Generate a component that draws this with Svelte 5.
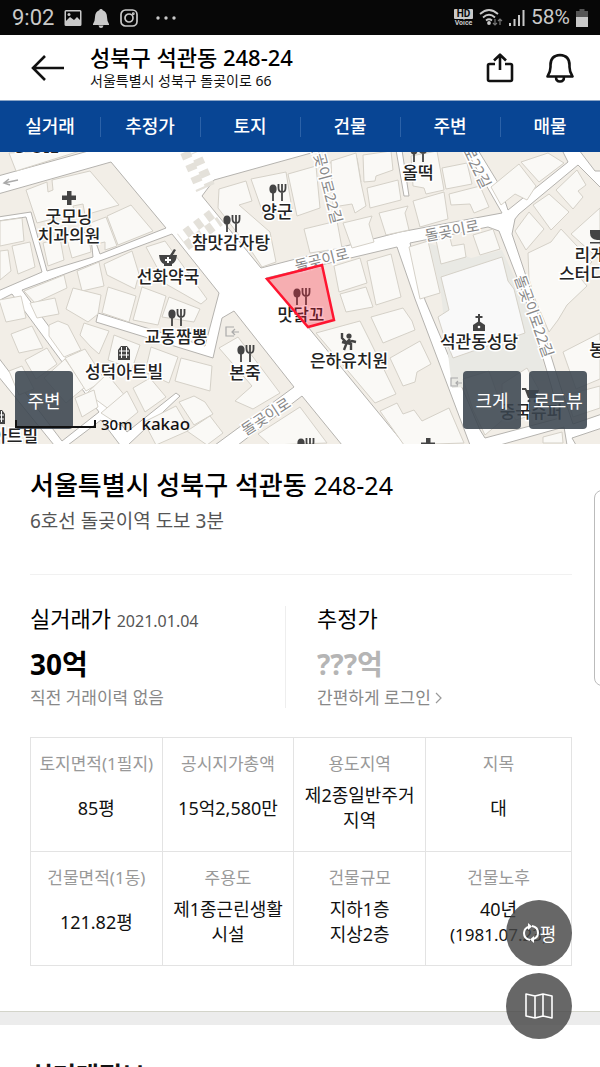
<script>
  const tabs = ['실거래', '추정가', '토지', '건물', '주변', '매물'];

  const rows = [
    [
      { label: '토지면적(1필지)', value: ['85평'] },
      { label: '공시지가총액', value: ['15억2,580만'] },
      { label: '용도지역', value: ['제2종일반주거', '지역'] },
      { label: '지목', value: ['대'] }
    ],
    [
      { label: '건물면적(1동)', value: ['121.82평'] },
      { label: '주용도', value: ['제1종근린생활', '시설'] },
      { label: '건물규모', value: ['지하1층', '지상2층'] },
      { label: '건물노후', value: ['40년', '(1981.07.23)'] }
    ]
  ];

  const blocks = [
    '-2,150 92,150 -2,176',
    '-2,194 111,162 166,228 100,254 95,240 89,218 93,257 47,271 31,212 -2,217',
    '-2,221 26,217 42,272 -2,291',
    '22,290 172,234 219,293 205,346 98,313 96,322 213,358 222,318 234,311 294,387 215,445 128,445 180,396 176,393 127,432',
    '-2,301 12,294 99,412 62,441 -2,357',
    '-2,376 54,445 -2,445',
    '68,445 101,420 120,445',
    '202,196 214,180 322,150 396,150 404,196 409,196 402,150 466,150 502,213 400,232 261,268',
    '478,150 500,186 508,210 568,162 562,150',
    '579,150 595,171 602,171 602,150',
    '266,278 397,247 415,299 470,445 405,445 308,327',
    '410,243 488,227 499,231 525,298 551,385 560,418 485,438 480,430 425,300',
    '515,219 519,214 578,165 602,189 602,414 573,424 560,385 529,285 512,234',
    '500,445 564,427 567,445',
    '576,445 572,438 602,428 602,445',
    '238,445 302,396 342,445'
  ];

  const buildings = [
    '9,153 45,151 80,151 16,171',
    '26,190 47,182 48,192 53,190 52,180 90,171 119,205 85,215 83,204 73,206 75,213 37,223',
    '43,243 60,238 64,260 48,266', '66,236 88,232 91,252 72,258',
    '107,216 131,205 153,231 118,245', '90,223 106,217 117,246 105,250 105,242 96,244',
    '0,221 22,218 24,241 0,246', '0,251 8,250 11,271 0,280', '12,246 30,242 35,267 18,274',
    '146,247 165,241 207,299 201,304 166,284', '104,264 132,251 139,274 135,289 107,275',
    '77,271 99,262 104,286 82,291', '24,291 64,275 67,288 35,303',
    '73,288 101,295 98,314 88,322 66,309', '108,287 136,296 129,322 102,313',
    '142,287 166,296 158,325 133,320', '169,297 200,309 194,322 162,317',
    '-1,300 21,296 26,318 6,322', '30,303 55,298 59,314 37,318',
    '49,325 58,321 68,325 81,350 64,357 49,336', '84,323 109,331 99,354 91,347 80,335',
    '114,335 140,345 132,369 108,360', '151,347 178,357 169,383 145,372',
    '181,358 212,366 210,391 175,381',
    '11,334 32,326 43,348 19,353', '25,360 47,348 57,364 36,379', '44,378 65,359 85,387 66,403',
    '65,358 85,349 105,380 86,391', '87,393 107,374 126,397 110,410',
    '101,413 127,391 138,412 121,426', '133,388 150,378 166,397 145,412',
    '144,422 176,406 190,430 156,445', '179,402 194,396 205,402 213,414 194,425',
    '187,431 210,416 223,433 207,445', '219,348 238,337 280,393 253,409 235,401 252,386',
    '75,398 94,390 98,407 82,417', '9,371 22,366 34,389 19,395',
    '219,189 246,181 252,201 239,205 270,232 276,262 262,267 252,252 218,208',
    '251,179 286,172 292,209 264,216', '288,174 316,166 320,208 297,216',
    '320,166 330,163 357,158 361,182 336,190 325,194',
    '331,161 356,153 361,183 366,206 355,213 352,204 333,207',
    '363,155 391,151 393,170 376,176 375,181 364,182', '367,188 398,180 401,200 370,208',
    '304,229 337,221 342,248 310,253',
    '343,223 372,216 369,224 374,242 352,248', '379,213 408,206 405,213 409,230 386,235',
    '413,201 444,192 448,219 420,227', '442,168 467,163 472,184 446,189',
    '449,194 480,186 489,207 474,213 470,204 451,205',
    '411,156 437,151 444,190 426,194 424,188 413,186', '491,187 519,164 536,186 527,200 515,194 501,205',
    '521,162 548,153 564,163 539,182', '533,205 549,194 569,212 551,230',
    '556,190 577,170 586,185 578,191 583,197 573,209', '515,231 529,212 544,229 526,250',
    '334,266 360,258 367,283 339,292', '367,261 391,254 401,297 376,305',
    '340,294 366,287 373,307 346,312', '409,247 428,241 440,293 420,299',
    '436,240 450,238 452,246 464,244 466,257 441,264', '473,235 493,229 500,249 480,255',
    '371,317 403,308 412,321 415,330 383,343', '316,333 360,321 370,341 396,394 375,403',
    '390,358 420,341 431,364 417,372 415,382 403,386',
    '380,411 397,403 403,414 414,410 422,421 449,408 464,443 404,445',
    '528,253 551,242 561,229 592,262 577,274 587,286 567,305 558,320 549,332 535,299 529,279',
    '571,234 600,208 600,260',
    '563,352 600,333 600,379 576,389', 
    '463,379 489,371 500,402 512,412 485,435 473,410', '502,384 527,368 538,388 545,411 516,420 502,400',
    '566,395 600,386 600,408 573,417', '543,437 562,432 563,443 543,443', '258,434 300,407 327,443 270,445'
  ];

  const pois = [
    { x: 69, y: 223, kind: 'cross', lines: ['굿모닝', '치과의원'] },
    { x: 277, y: 218, kind: 'food', lines: ['양군'] },
    { x: 231, y: 249, kind: 'food', lines: ['참맛감자탕'] },
    { x: 168, y: 283, kind: 'pharmacy', lines: ['선화약국'] },
    { x: 418, y: 179, kind: 'food', lines: ['올떡'] },
    { x: 176, y: 343, kind: 'food', lines: ['교동짬뽕'] },
    { x: 124, y: 378, kind: 'building', lines: ['성덕아트빌'] },
    { x: 245, y: 379, kind: 'food', lines: ['본죽'] },
    { x: 349, y: 367, kind: 'kids', lines: ['은하유치원'] },
    { x: 479, y: 348, kind: 'church', lines: ['석관동성당'] },
    { x: 598, y: 261, kind: 'cafe', lines: ['리게인', '스터디카페'] },
    { x: 531, y: 418, kind: 'cart', lines: ['중국슈퍼'] },
    { x: 605, y: 356, kind: 'none', lines: ['봉스'] },
    { x: -1, y: 442, kind: 'building', lines: ['석관아트빌'] }
  ];

  const streets = [
    { x: 323, y: 265, r: -14, text: '돌곶이로' },
    { x: 453, y: 236, r: -11, text: '돌곶이로' },
    { x: 269, y: 421, r: -33, text: '돌곶이로' },
    { x: 321, y: 183, r: 75, text: '돌곶이로22길' },
    { x: 463, y: 151, r: 64, text: '돌곶이로22길' },
    { x: 529, y: 318, r: 70, text: '돌곶이로22길' }
  ];
</script>

{#snippet poiIcon(kind)}
  {#if kind === 'food'}
    <ellipse cx="-4" cy="-4" rx="3.600" ry="4.500" />
    <path d="M-4-2V8M5-9V8M1.500-9v4q0 4 3.500 4t3.500-4v-4" fill="none" stroke="#444" stroke-width="1.800" />
  {:else if kind === 'cross'}
    <path d="M-2-7h4.500v4.500H7v4.500H2.500V7H-2V2h-5v-4.500h5z" />
  {:else if kind === 'pharmacy'}
    <path d="M-9-3H9Q8 5 4 6v2h-8V6Q-8 5-9-3zM2-3 6-9l2 1-3 5z" />
    <path d="M0-1v6M-3 2h6" stroke="#fff" stroke-width="2" />
  {:else if kind === 'building'}
    <path d="M-6 7V-3l3-4h6l3 4V7z" />
    <path d="M-5-2H5M-5 2H5M-2.500-6V5M2.500-6V5" stroke="#fff" stroke-width="1" />
  {:else if kind === 'kids'}
    <circle cx="0" cy="-6" r="2.600" />
    <path d="M-7-9v5l5 5 5-2 4 1M-2 0l-3 8M-2 1 2 2v6M-2 0l3-3M-7 0l4 1" fill="none" stroke="#444" stroke-width="2.400" />
  {:else if kind === 'church'}
    <path d="M-6 8V2l6-4 6 4v6z" />
    <path d="M0-9V0M-3.500-6h7" stroke="#444" stroke-width="2" />
    <circle cx="0" cy="4" r="1.300" fill="#fff" />
  {:else if kind === 'cafe'}
    <path d="M-8-6H9v4q-1 6-7 6h-3q-7-1-7-7zM-8 6H9v1.500H-8z" />
  {:else if kind === 'cart'}
    <path d="M-9-5h4l1 2H8L5 5h-8L-6-3h-3z" />
    <circle cx="-2" cy="8" r="1.500" /><circle cx="4" cy="8" r="1.500" />
  {/if}
{/snippet}

<div class="app">
  <div class="status">
    <div class="status-left">
      <span class="clock">9:02</span>
      <svg width="18" height="18" viewBox="0 0 18 18"><path fill-rule="evenodd" fill="#c9c9c9" d="M2 1h14q1.500 0 1.500 1.500v13q0 1.500-1.500 1.500H2Q.5 17 .5 15.500v-13Q.5 1 2 1zm0 1.500V12l4-4 4 3 3-3 3 3V2.500z" /><circle cx="5" cy="5.500" r="1.500" fill="#c9c9c9" /></svg>
      <svg width="18" height="20" viewBox="0 0 18 20"><path fill="#c9c9c9" d="M9 1q1.500 0 1.700 1.300Q15 4 15 9q0 4 2 7v1H1v-1q2-3 2-7 0-5 4.300-6.700Q7.500 1 9 1zM6.500 17.500h5Q11 20 9 20t-2.500-2.500z" /></svg>
      <svg width="18" height="18" viewBox="0 0 18 18" fill="none" stroke="#c9c9c9" stroke-width="1.700"><rect x="1" y="1" width="16" height="16" rx="4.500" /><circle cx="9" cy="9" r="4" /><circle cx="13.300" cy="4.700" r=".6" /></svg>
      <svg class="more" width="20" height="4" viewBox="0 0 20 4" fill="#c9c9c9"><circle cx="2" cy="2" r="1.700" /><circle cx="10" cy="2" r="1.700" /><circle cx="18" cy="2" r="1.700" /></svg>
    </div>
    <div class="status-right">
      <span class="volte"><b>HD</b><i>Voice</i></span>
      <svg width="24" height="20" viewBox="0 0 24 20" fill="none" stroke="#c9c9c9" stroke-width="1.800"><path d="M1 6Q10-2 19 6M4 9.500q6-5.500 12 0M7 12.500q3-2.500 6 0" /><circle cx="10" cy="15" r="1" fill="#c9c9c9" /><path stroke="#777" stroke-width="1.200" d="M16 11v6m-2-2 2 2 2-2M21 17v-6m-2 2 2-2 2 2" /></svg>
      <svg width="16" height="18" viewBox="0 0 16 18" fill="#c9c9c9"><path d="M0 14h2v3H0zM4.500 10h2v7h-2zM9 6h2v11H9zM13.500 1h2v16h-2z" /></svg>
      <span class="battery-text">58%</span>
      <svg width="12" height="18" viewBox="0 0 12 18"><path fill="#555" d="M3.500 0h5v2H12v6H0V2h3.500z" /><path fill="#c9c9c9" d="M0 8h12v10H0z" /></svg>
    </div>
  </div>

  <header>
    <button class="icon back" aria-label="뒤로">
      <svg width="34" height="26" viewBox="0 0 34 26" fill="none" stroke="#111" stroke-width="2.600"><path d="M33 13H2M14 1 2 13l12 12" /></svg>
    </button>
    <div class="heading">
      <strong>성북구 석관동 248-24</strong>
      <span>서울특별시 성북구 돌곶이로 66</span>
    </div>
    <button class="icon" aria-label="공유">
      <svg width="28" height="30" viewBox="0 0 28 30" fill="none" stroke="#111" stroke-width="2.600" stroke-linejoin="round"><path d="M9 11H3.500Q2 11 2 12.500v14Q2 28 3.500 28h21q1.500 0 1.500-1.500v-14Q26 11 24.500 11H19M14 17V2M8 7.500 14 1.700l6 5.800" /></svg>
    </button>
    <button class="icon" aria-label="알림">
      <svg width="28" height="30" viewBox="0 0 28 30" fill="none" stroke="#111" stroke-width="2.600" stroke-linejoin="round"><path d="M1.500 23.500Q4.500 19 4.500 14v-2q0-9.500 9.500-10 9.500.5 9.500 10v2q0 5 3 9.500zM10 24q0 4.500 4 4.500t4-4.500" /></svg>
    </button>
  </header>

  <nav>
    {#each tabs as tab}
      <a href="#{tab}">{tab}</a>
    {/each}
  </nav>

  <div class="map">
    <svg class="canvas" viewBox="0 152 600 292" preserveAspectRatio="xMidYMid slice">
      <g fill="#f2eee7" stroke="#b5b3af" stroke-width="1">
        {#each blocks as points}<polygon {points} />{/each}
      </g>
      <polygon points="429,243 471,258 502,250 525,300 548,380 452,388 441,294" fill="#e9e9e4" />
      <g fill="#faf9f6" stroke="#d5d1c8" stroke-width="1">
        {#each buildings as points}<polygon {points} />{/each}
        <polygon points="441,277 502,257 508,281 514,289 525,333 453,358 444,336 438,317 449,310" fill="#f9f9f9" />
      </g>
      <g fill="none" stroke="#e4e1da" stroke-width="10" stroke-dasharray="7 6">
        <path d="M185 152 201 190" /><path d="M195 152 210 186" stroke-dashoffset="6" />
        <path d="M186 246 220 221" /><path d="M180 238 212 214" stroke-dashoffset="6" />
      </g>
      <path d="M18 180 4 183m5-4-5 4 6 2" fill="none" stroke="#aaa" stroke-width="1.500" />
      <path d="M234 327h-8v9h8m5-4h-7m3-3-3 3 3 3M458 378h-7v8h7m4-3h-6m2-2-2 2 2 2" fill="none" stroke="#aaa" stroke-width="1.200" />

      {#each streets as s}
        <text class="street" text-anchor="middle" transform="translate({s.x} {s.y}) rotate({s.r})">{s.text}</text>
      {/each}

      {#each pois as p}
        <g transform="translate({p.x} {p.y - 25})" fill="#444">{@render poiIcon(p.kind)}</g>
        {#each p.lines as line, i}
          <text class="poi" text-anchor="middle" x={p.x} y={p.y + i * 19}>{line}</text>
        {/each}
      {/each}
      <text class="poi" text-anchor="middle" x="301" y="321">맛닭꼬</text>
      <g transform="translate(301 297)" fill="#444">{@render poiIcon('food')}</g>
      <g transform="translate(305 447)" fill="#444">{@render poiIcon('food')}</g>
      <g transform="translate(428 445)" fill="#444">{@render poiIcon('cross')}</g>
      <text class="poi" text-anchor="middle" x="37" y="153">S-OIL</text>

      <polygon points="267,279 322,265 334,320 308,327" fill="#ff1c35" fill-opacity=".3" stroke="#ff1530" stroke-width="2.500" />
    </svg>
    <button class="tool around">주변</button>
    <div class="tools">
      <button class="tool">크게</button>
      <button class="tool">로드뷰</button>
    </div>
    <div class="scale"><span class="bar"></span><b>30m</b><em>kakao</em></div>
  </div>

  <main>
    <section class="summary">
      <h1>서울특별시 성북구 석관동 <span>248-24</span></h1>
      <p class="station">6호선 돌곶이역 도보 3분</p>

      <div class="prices">
        <div class="price">
          <h2>실거래가 <time>2021.01.04</time></h2>
          <strong>30억</strong>
          <p>직전 거래이력 없음</p>
        </div>
        <div class="price estimate">
          <h2>추정가</h2>
          <strong>???억</strong>
          <p><a href="#login">간편하게 로그인 <svg width="7" height="12" viewBox="0 0 7 12" fill="none" stroke="#999" stroke-width="1.200"><path d="M1 1l5 5-5 5" /></svg></a></p>
        </div>
      </div>

      <table>
        <tbody>
          {#each rows as row}
            <tr>
              {#each row as cell}
                <td>
                  <div class="cell">
                    <span class="label">{cell.label}</span>
                    <div class="value">
                      {#each cell.value as line}
                        <span class:small={line.startsWith('(')}>{line}</span>
                      {/each}
                    </div>
                  </div>
                </td>
              {/each}
            </tr>
          {/each}
        </tbody>
      </table>
    </section>
    <div class="gap"></div>
    <section class="deals">
      <h2>실거래정보</h2>
    </section>
  </main>

  <div class="drawer"></div>
  <div class="fabs">
    <button aria-label="평 단위 전환">
      <svg width="18" height="20" viewBox="0 0 18 20" fill="none" stroke="#fff" stroke-width="2"><path d="M8 17Q2 16 2 10q0-5 6-6.500M10 3q6 1 6 7 0 5-6 6.500" /><path d="M6 0l4 3.500L6 7zM12 13l-4 3.500 4 3.500z" fill="#fff" stroke="none" /></svg>
      <span>평</span>
    </button>
    <button aria-label="지도">
      <svg width="28" height="28" viewBox="0 0 28 28" fill="none" stroke="#fff" stroke-width="1.600" stroke-linejoin="round"><path d="M1 2l9 2 8-2 9 2v22l-9-2-8 2-9-2zM10 4v22M18 2v22" /></svg>
    </button>
  </div>
</div>

<style>
  :global(body) { margin: 0; background: #fff; }
  .app {
    position: relative;
    display: flex;
    flex-direction: column;
    height: 100vh;
    overflow: hidden;
    background: #fff;
    color: #111;
    font-family: "Noto Sans", "Noto Sans CJK KR", sans-serif;
  }
  h1, h2, p { margin: 0; }
  button { border: 0; padding: 0; font-family: inherit; cursor: pointer; }
  a { color: inherit; text-decoration: none; }

  .status {
    flex: none;
    display: flex;
    justify-content: space-between;
    align-items: center;
    height: 35px;
    padding: 0 12px;
    background: #070707;
    color: #c9c9c9;
    font: 22px/35px Roboto, sans-serif;
  }
  .status-left, .status-right { display: flex; align-items: center; }
  .status-left { gap: 10px; }
  .status-right { gap: 6px; }
  .more { margin-left: 8px; }
  .battery-text { font-size: 21px; }
  .volte { display: flex; flex-direction: column; align-items: center; }
  .volte b { width: 19px; border-radius: 1px; background: #c9c9c9; color: #070707; font-size: 10px; line-height: 10px; text-align: center; }
  .volte i { font: bold 7px/8px Roboto, sans-serif; }

  header {
    flex: none;
    display: flex;
    align-items: center;
    gap: 32px;
    height: 65px;
    padding: 0 26px 0 31px;
    border-bottom: 1px solid #8ba5c6;
  }
  .icon { display: flex; background: none; }
  .back { margin-right: -7px; }
  .heading { flex: 1; display: flex; flex-direction: column; }
  .heading strong { font-size: 22px; line-height: 27px; font-weight: 500; color: #000; }
  .heading span { font-size: 14px; line-height: 20px; }

  nav { flex: none; display: grid; grid-template-columns: repeat(6, 1fr); background: #084594; }
  nav a { position: relative; color: #fff; font-size: 18px; line-height: 51px; font-weight: 500; text-align: center; }
  nav a + a::before { content: ""; position: absolute; left: 0; top: 16px; height: 20px; border-left: 1px solid #2c62a8; }

  .map { flex: none; position: relative; height: 292px; overflow: hidden; }
  .canvas { display: block; width: 100%; height: 100%; background: #fff; }
  .poi { font-size: 17px; font-weight: 500; fill: #222; stroke: #fff; stroke-width: 3px; paint-order: stroke; }
  .street { font-size: 15px; fill: #888; stroke: #fff; stroke-width: 3px; paint-order: stroke; }
  .tool {
    width: 58px;
    height: 58px;
    border-radius: 4px;
    background: rgba(58, 68, 78, 0.88);
    color: #fff;
    font-size: 18px;
  }
  .around { position: absolute; left: 15px; top: 219px; }
  .tools { position: absolute; right: 13px; top: 219px; display: flex; gap: 8px; }
  .scale { position: absolute; left: 15px; bottom: 7px; display: flex; align-items: center; color: #111; }
  .bar { width: 77px; height: 6px; border: 2px solid #111; border-top: 0; }
  .scale b { margin: 0 9px 0 5px; font-size: 15px; line-height: 26px; font-weight: 500; }
  .scale em { font-size: 17px; line-height: 26px; font-weight: 500; font-style: normal; }

  .summary { padding: 22px 28px 45px 30px; }
  h1 { font-size: 26px; line-height: 38px; font-weight: 500; color: #000; }
  h1 span { font-size: 25px; font-weight: 400; }
  .station { padding: 3px 0 38px; border-bottom: 1px solid #f1f1f1; color: #555; font-size: 19px; line-height: 29px; }
  .prices { display: grid; grid-template-columns: 255px 1fr; padding: 31px 0 29px; }
  .price { height: 102px; }
  .price h2 { height: 24px; font-size: 22px; line-height: 24px; font-weight: 400; color: #000; }
  .price time { color: #555; font-size: 16px; line-height: 16px; }
  .price strong { display: block; padding-top: 14px; font-size: 28px; line-height: 40px; font-weight: 700; color: #000; }
  .price p { padding-top: 1px; color: #888; font-size: 17px; line-height: 26px; }
  .estimate { padding-left: 31px; border-left: 1px solid #eee; }
  .estimate strong { color: #b5b5b5; }

  table { width: 100%; border-collapse: collapse; table-layout: fixed; }
  td { padding: 0; border: 1px solid #e3e3e3; vertical-align: top; }
  td:last-child { width: 145px; }
  .cell { display: flex; flex-direction: column; height: 113px; padding-top: 12px; box-sizing: border-box; text-align: center; }
  .label { color: #999; font-size: 17px; line-height: 28px; }
  .value { display: flex; flex-direction: column; justify-content: center; height: 60px; font-size: 18px; line-height: 25px; white-space: nowrap; }
  .small { font-size: 17px; }

  .gap { height: 13px; border-top: 1px solid #d3d4ca; background: #ececec; }
  .deals { padding: 32px 30px; }
  .deals h2 { font-size: 25px; line-height: 36px; font-weight: 700; }

  .drawer {
    position: absolute;
    right: -10px;
    top: 490px;
    width: 14px;
    height: 194px;
    border: 1px solid #bbb;
    border-radius: 8px;
    background: #fff;
  }
  .fabs { position: absolute; right: 28px; top: 900px; display: flex; flex-direction: column; gap: 7px; }
  .fabs button {
    display: flex;
    align-items: center;
    justify-content: center;
    width: 66px;
    height: 66px;
    border-radius: 50%;
    background: rgba(70, 70, 70, 0.82);
    color: #fff;
    font-size: 18px;
  }
</style>
